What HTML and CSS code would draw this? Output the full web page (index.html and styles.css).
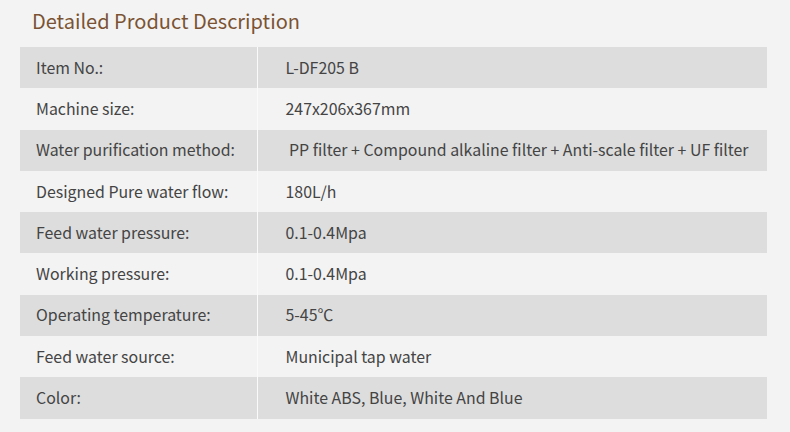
FILE: index.html
```html
<!DOCTYPE html>
<html>
<head>
<meta charset="utf-8">
<link rel="stylesheet" href="styles.css">
</head>
<body>
<div class="page">
  <h2 class="title">Detailed Product Description</h2>
  <table class="spec">
    <tr class="odd"><td class="k">Item No.:</td><td class="v">L-DF205 B</td></tr>
    <tr><td class="k">Machine size:</td><td class="v">247x206x367mm</td></tr>
    <tr class="odd"><td class="k">Water purification method:</td><td class="v">&nbsp;PP filter + Compound alkaline filter + Anti-scale filter + UF filter</td></tr>
    <tr><td class="k">Designed Pure water flow:</td><td class="v">180L/h</td></tr>
    <tr class="odd"><td class="k">Feed water pressure:</td><td class="v">0.1-0.4Mpa</td></tr>
    <tr><td class="k">Working pressure:</td><td class="v">0.1-0.4Mpa</td></tr>
    <tr class="odd"><td class="k">Operating temperature:</td><td class="v">5-45℃</td></tr>
    <tr><td class="k">Feed water source:</td><td class="v">Municipal tap water</td></tr>
    <tr class="odd"><td class="k">Color:</td><td class="v">White ABS, Blue, White And Blue</td></tr>
  </table>
</div>
</body>
</html>
```
FILE: styles.css
```css
html, body {
  margin: 0;
  padding: 0;
  background: #f3f3f3;
}
body {
  font-family: "Noto Sans CJK SC", "Source Sans Pro", "Open Sans", sans-serif;
  color: #444;
}
.page {
  width: 790px;
  height: 432px;
  padding: 0 23px 0 20px;
  box-sizing: border-box;
}
.title {
  margin: 0;
  padding: 6px 0 0 12px;
  height: 41px;
  box-sizing: border-box;
  font-size: 20px;
  font-weight: normal;
  color: #7b5333;
  line-height: 30px;
}
.spec {
  width: 747px;
  border-collapse: collapse;
  margin-top: 6px;
}
.spec td {
  height: 41.3px;
  padding: 0;
  font-size: 15.9px;
  line-height: 20px;
  vertical-align: middle;
  box-sizing: border-box;
}
.spec tr.odd td {
  background: #dddddd;
}
.spec td.k {
  width: 237px;
  padding-left: 16px;
  border-right: 1px solid #fafafa;
}
.spec td.v {
  padding-left: 28px;
}
```
